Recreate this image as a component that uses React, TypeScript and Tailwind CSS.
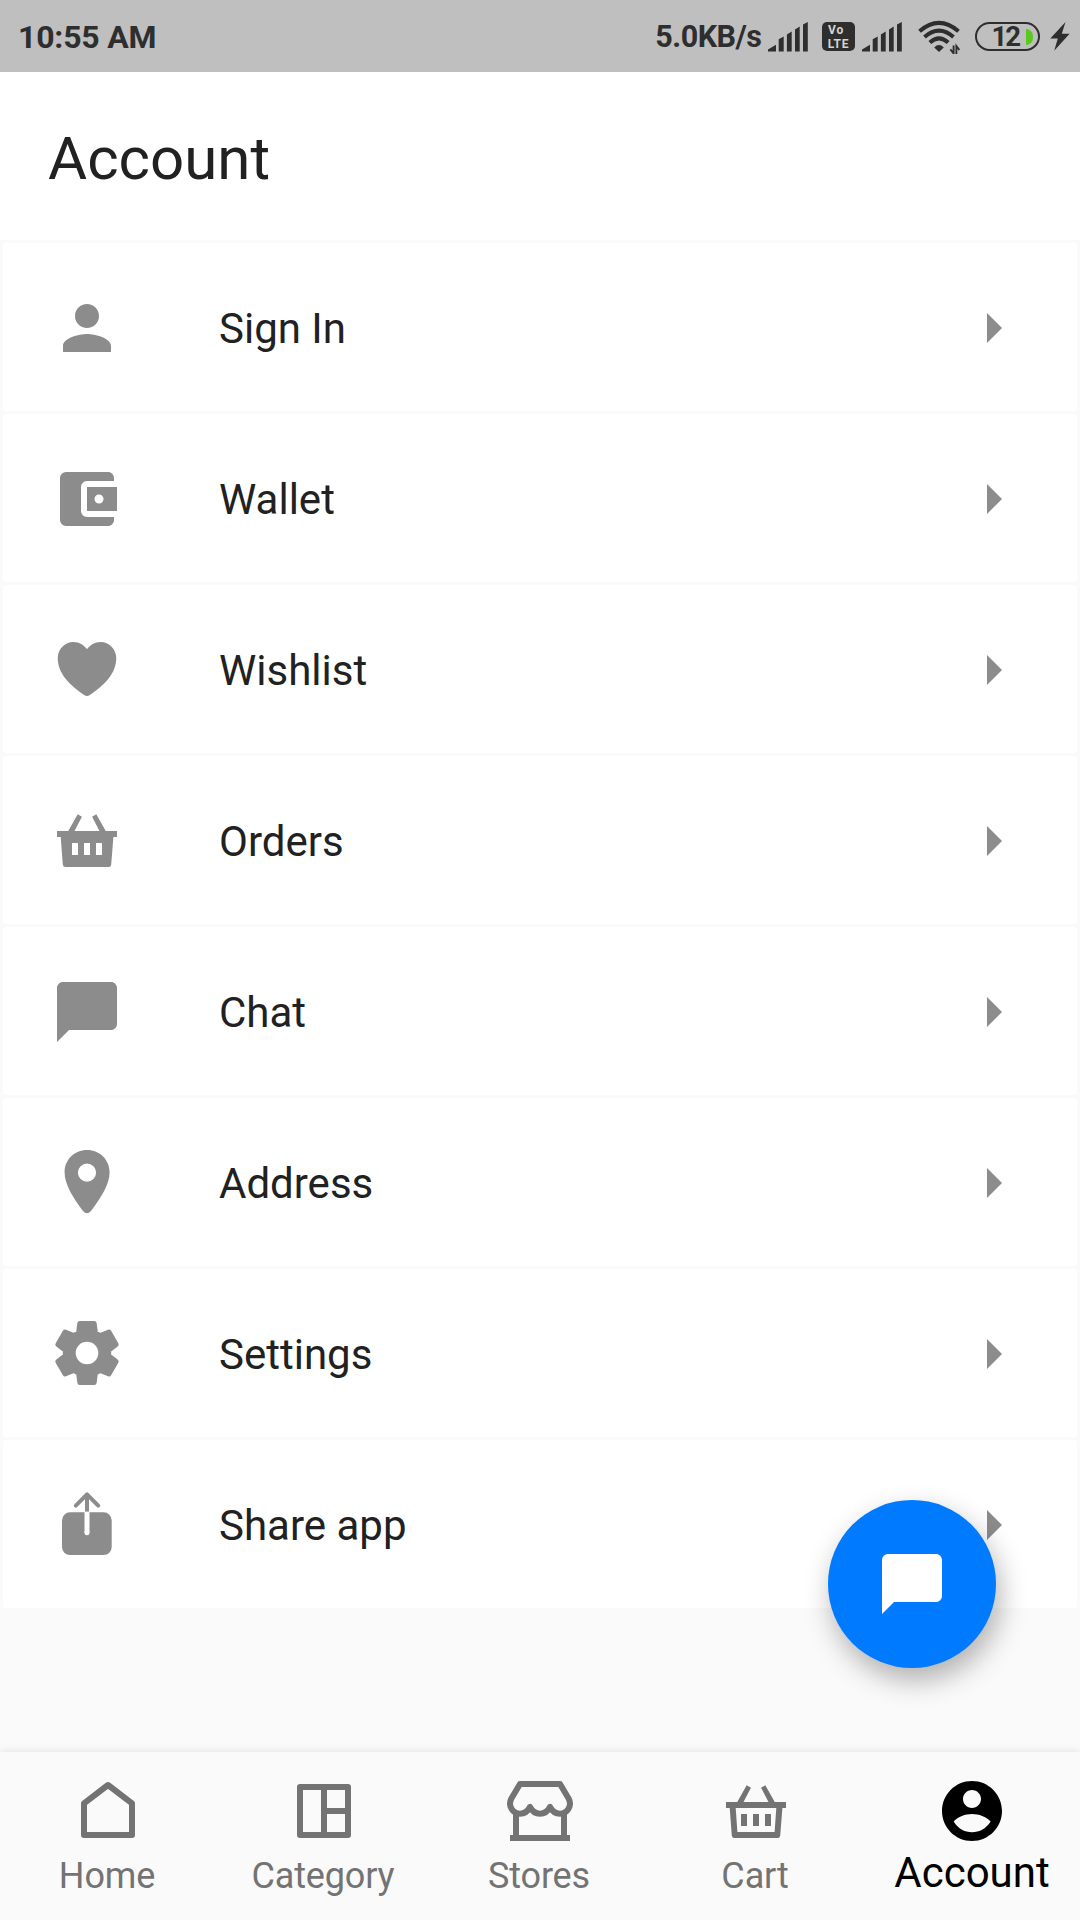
import type { ReactNode } from "react";
import { MdPerson, MdAccountBalanceWallet, MdChatBubble, MdArrowRight } from "react-icons/md";
import { IoHeart } from "react-icons/io5";

const BASKET_HANDLES = "M16.7 27L26.7 9.3L30.9 11.7L23 27ZM55.3 27L45.3 9.3L41.1 11.7L49 27Z";

function Svg({ children }: { children: ReactNode }) {
  return (
    <svg viewBox="0 0 72 72" className="size-[72px]" fill="currentColor">
      {children}
    </svg>
  );
}

function OrdersIcon() {
  return (
    <Svg>
      <path d={BASKET_HANDLES} />
      <path
        fillRule="evenodd"
        d="M6 26H66V32H62.4L60.2 59.5Q60 62 57.6 62H14.4Q12 62 11.8 59.5L9.7 32H6ZM21 38V50H27V38ZM33 38V50H39V38ZM45 38V50H51V38Z"
      />
    </Svg>
  );
}

function PinIcon() {
  return (
    <Svg>
      <path
        fillRule="evenodd"
        d="M36 3C23.2 3 13.6 13 13.6 25.2C13.6 37.5 22 50.5 32 64Q36 68.4 40 64C50 50.5 58.6 37.5 58.6 25.2C58.6 13 48.8 3 36 3ZM36 16.5A9.1 9.1 0 1 1 36 34.7A9.1 9.1 0 1 1 36 16.5Z"
      />
    </Svg>
  );
}

const TOOTH: [number, number][] = [
  [-8.4, -20.2],
  [-7.2, -29.5],
  [7.2, -29.5],
  [8.4, -20.2],
];

const GEAR =
  "M" +
  [0, 60, 120, 180, 240, 300]
    .flatMap((deg) => {
      const a = (deg * Math.PI) / 180;
      return TOOTH.map(([x, y]) =>
        `${(x * Math.cos(a) - y * Math.sin(a)).toFixed(2)} ${(x * Math.sin(a) + y * Math.cos(a)).toFixed(2)}`,
      );
    })
    .join("L") +
  "Z";

function GearIcon() {
  return (
    <Svg>
      <g transform="translate(36 35)">
        <path d={GEAR} stroke="currentColor" strokeWidth="5" strokeLinejoin="round" />
        <circle r="11.3" fill="#fff" />
      </g>
    </Svg>
  );
}

function ShareIcon() {
  return (
    <Svg>
      <rect x="11" y="23.3" width="49.7" height="42.7" rx="8" />
      <path d="M36 23V44" stroke="#fff" strokeWidth="5" />
      <circle cx="36" cy="43.8" r="2.5" fill="#fff" />
      <path d="M36 22.6V6" stroke="currentColor" strokeWidth="4" />
      <path
        d="M24.8 16.6L36 5.4L47.2 16.6"
        fill="none"
        stroke="currentColor"
        strokeWidth="4"
        strokeLinecap="round"
        strokeLinejoin="round"
      />
    </Svg>
  );
}

function HomeIcon() {
  return (
    <Svg>
      <path d="M12 60V28.3L36 10L60 28.3V60Z" fill="none" stroke="currentColor" strokeWidth="6" strokeLinejoin="round" />
    </Svg>
  );
}

function CategoryIcon() {
  return (
    <Svg>
      <path
        d="M12 12H60V60H12ZM36 12V60M36 36H60"
        fill="none"
        stroke="currentColor"
        strokeWidth="6"
        strokeLinejoin="round"
      />
    </Svg>
  );
}

function StoresIcon() {
  return (
    <Svg>
      <path d="M6 60H66V66H6ZM9 38H15V61H9ZM57 38H63V61H57Z" />
      <path
        d="M16 9H56L64.6 23.5C68.6 31 63 38.7 56 38.7Q49.5 38.7 46 32Q42.5 38.7 36 38.7Q29.5 38.7 26 32Q22.5 38.7 16 38.7C9 38.7 3.4 31 7.4 23.5Z"
        fill="none"
        stroke="currentColor"
        strokeWidth="6"
        strokeLinejoin="round"
      />
    </Svg>
  );
}

function CartIcon() {
  return (
    <Svg>
      <path d={BASKET_HANDLES} transform="translate(0 1)" />
      <path
        fillRule="evenodd"
        d="M6 27H66V33H62.4L60.2 60.5Q60 63 57.6 63H14.4Q12 63 11.8 60.5L9.7 33H6ZM15.7 33L17.4 57H54.6L56.3 33Z"
      />
      <path d="M21 39H27V51H21ZM33 39H39V51H33ZM45 39H51V51H45Z" />
    </Svg>
  );
}

function AccountIcon() {
  return (
    <svg viewBox="0 0 24 24" className="size-[72px]" fill="currentColor">
      <path d="M12 2C6.48 2 2 6.48 2 12s4.48 10 10 10 10-4.48 10-10S17.52 2 12 2zm0 3c1.66 0 3 1.34 3 3s-1.34 3-3 3-3-1.34-3-3 1.34-3 3-3zm0 14.1c-2.5 0-4.75-1.3-6.1-3.6C7.4 13.9 9.7 13 12 13s4.7.9 6.2 2.5C16.8 17.8 14.5 19.1 12 19.1z" />
    </svg>
  );
}

function Signal() {
  return (
    <svg viewBox="0 0 40 30" className="h-[30px] w-[40px]" fill="#2e2e2e">
      <path d="M0 29.5V27.5L8 22.8V29.5ZM10.7 29.5V17.3L15.7 14.6V29.5ZM18.9 29.5V12.5L23.7 9.5V29.5ZM27 29.5V7.5L31.7 4.5V29.5ZM35 29.5V2.5L39.8 0V29.5Z" />
    </svg>
  );
}

function Wifi() {
  return (
    <svg viewBox="0 0 44 34" className="h-[34px] w-[44px]" fill="none" stroke="#2e2e2e" strokeWidth="4">
      <path d="M1.5 11.2Q21 -5.6 40.5 11.2" />
      <path d="M6.5 17Q21 4.4 35.5 17" />
      <path d="M11.8 22.6Q21 14.2 30.2 22.6" />
      <path d="M16.2 27.5Q21 22.6 25.8 27.5L21 32Z" fill="#2e2e2e" stroke="none" />
      <path d="M35.6 25.5V33.4L32.4 29.4M38.4 34V26L41.4 30" strokeWidth="1.9" />
    </svg>
  );
}

function StatusBar() {
  return (
    <div className="flex h-[72px] items-center bg-[#bfbfbf] pt-[1px] pl-[18px] pr-[10px] font-bold text-[#2e2e2e]">
      <span className="text-[32px] leading-[40px] tracking-[-0.2px]">10:55 AM</span>
      <span className="ml-auto text-[30.5px] leading-[40px] tracking-[-0.5px]">5.0KB/s</span>
      <span className="ml-[6.5px]">
        <Signal />
      </span>
      <span className="ml-[14px] flex h-[29px] w-[33px] flex-col items-center justify-center rounded-[5px] bg-[#2e2e2e] text-[#d4d4d4]">
        <span className="-ml-[5px] text-[12px] leading-[14px] tracking-[0.8px]">Vo</span>
        <span className="text-[12px] leading-[14px] tracking-[0.8px]">LTE</span>
      </span>
      <span className="ml-[7px]">
        <Signal />
      </span>
      <span className="ml-[16px]">
        <Wifi />
      </span>
      <span className="ml-[13px] flex h-[29px] w-[65px] items-center justify-end rounded-full border-[2.5px] border-[#2e2e2e] pr-[5px]">
        <span className="text-[27.5px] leading-[26px] tracking-[-2px]">12</span>
        <span className="ml-[7px] h-[16px] w-[7px] rounded-r-full bg-[#5ac81e]" />
      </span>
      <svg viewBox="0 0 20 29" className="ml-[10px] h-[29px] w-[20px]" fill="#2e2e2e">
        <path d="M15.5 0L0.3 16.5H7.8L4.2 28.8L19.6 11.8H11.8Z" />
      </svg>
    </div>
  );
}

const rows: { label: string; icon: ReactNode }[] = [
  { label: "Sign In", icon: <MdPerson size={72} /> },
  { label: "Wallet", icon: <MdAccountBalanceWallet size={72} /> },
  { label: "Wishlist", icon: <IoHeart size={72} className="mb-[2px]" /> },
  { label: "Orders", icon: <OrdersIcon /> },
  { label: "Chat", icon: <MdChatBubble size={72} /> },
  { label: "Address", icon: <PinIcon /> },
  { label: "Settings", icon: <GearIcon /> },
  { label: "Share app", icon: <ShareIcon /> },
];

const tabs: { label: string; icon: ReactNode; active?: boolean }[] = [
  { label: "Home", icon: <HomeIcon /> },
  { label: "Category", icon: <CategoryIcon /> },
  { label: "Stores", icon: <StoresIcon /> },
  { label: "Cart", icon: <CartIcon /> },
  { label: "Account", icon: <AccountIcon />, active: true },
];

export default function App() {
  return (
    <div className="relative flex h-[1920px] w-[1080px] flex-col overflow-hidden bg-[#fafafa] font-['Roboto',sans-serif]">
      <StatusBar />
      <header className="flex h-[168px] items-center bg-white pt-[5px] pl-[48px]">
        <h1 className="text-[60px] leading-[72px] text-[#212121]">Account</h1>
      </header>
      <main className="flex flex-1 flex-col gap-[3px] px-[3px] pt-[3px]">
        {rows.map((row) => (
          <div key={row.label} className="flex h-[168px] items-center rounded-[3px] bg-white pt-[2px] pr-[48px] pl-[48px]">
            <span className="text-[#8c8c8c]">{row.icon}</span>
            <span className="ml-[96px] flex-1 pt-[2px] text-[42px] leading-[50px] text-[#212121]">{row.label}</span>
            <MdArrowRight size={72} className="text-[#8c8c8c]" />
          </div>
        ))}
      </main>
      <nav className="flex h-[168px] bg-[#fafafa] shadow-[0_-1px_8px_rgba(0,0,0,0.09)]">
        {tabs.map((tab) => (
          <div
            key={tab.label}
            className={
              tab.active
                ? "flex w-[216px] flex-col items-center pt-[23px] text-black"
                : "flex w-[216px] flex-col items-center pt-[23px] text-[#737373]"
            }
          >
            {tab.icon}
            <span
              className={
                tab.active
                  ? "mt-[1px] text-[42px] leading-[50px]"
                  : "mt-[4px] pr-[2px] text-[36px] leading-[50px] tracking-[-0.15px]"
              }
            >
              {tab.label}
            </span>
          </div>
        ))}
      </nav>
      <button className="absolute top-[1500px] left-[828px] flex size-[168px] items-center justify-center rounded-full bg-[#007aff] text-white shadow-[4px_12px_28px_rgba(0,0,0,0.3)]">
        <MdChatBubble size={72} />
      </button>
    </div>
  );
}
